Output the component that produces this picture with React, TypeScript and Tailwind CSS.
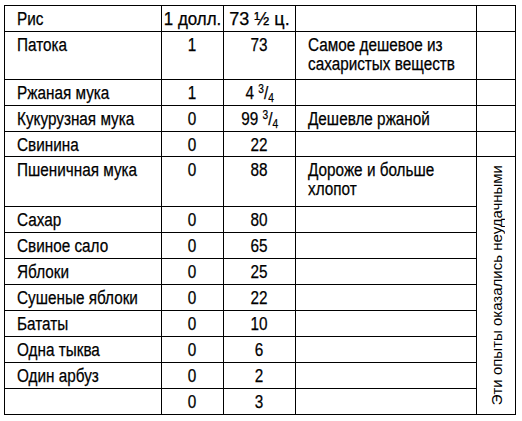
import React from "react";

type Row = { name: string; a: string; b: React.ReactNode; note?: React.ReactNode; h: string };

const frac = (whole: string) => (
  <>
    {whole} <sup className="text-[12px]">3</sup>/<sub className="text-[12px]">4</sub>
  </>
);

const rows: Row[] = [
  { name: "Рис", a: "1 долл.", b: "73 ½ ц.", h: "h-[26px]" },
  {
    name: "Патока",
    a: "1",
    b: "73",
    note: (
      <>
        Самое дешевое из
        <br />
        сахаристых веществ
      </>
    ),
    h: "h-[48px]",
  },
  { name: "Ржаная мука", a: "1", b: frac("4"), h: "h-[26px]" },
  { name: "Кукурузная мука", a: "0", b: frac("99"), note: "Дешевле ржаной", h: "h-[26px]" },
  { name: "Свинина", a: "0", b: "22", h: "h-[25px]" },
  {
    name: "Пшеничная мука",
    a: "0",
    b: "88",
    note: (
      <>
        Дороже и больше
        <br />
        хлопот
      </>
    ),
    h: "h-[50px]",
  },
  { name: "Сахар", a: "0", b: "80", h: "h-[26px]" },
  { name: "Свиное сало", a: "0", b: "65", h: "h-[26px]" },
  { name: "Яблоки", a: "0", b: "25", h: "h-[26px]" },
  { name: "Сушеные яблоки", a: "0", b: "22", h: "h-[26px]" },
  { name: "Бататы", a: "0", b: "10", h: "h-[26px]" },
  { name: "Одна тыква", a: "0", b: "6", h: "h-[26px]" },
  { name: "Один арбуз", a: "0", b: "2", h: "h-[26px]" },
  { name: "", a: "0", b: "3", h: "h-[26px]" },
];

export default function App() {
  return (
    <div className="w-[522px] h-[421px] overflow-hidden bg-white pt-[5px] pl-[4px] text-black font-['Liberation_Sans','Arial',sans-serif] text-[18px] leading-[19px] [-webkit-text-stroke:0.25px_#000]">
      <table className="border-collapse table-fixed w-[511px]">
        <colgroup>
          <col className="w-[157px]" />
          <col className="w-[62px]" />
          <col className="w-[72px]" />
          <col className="w-[181px]" />
          <col className="w-[39px]" />
        </colgroup>
        <tbody>
          {rows.map((r, i) => (
            <tr key={i} className={r.h}>
              <td className="border border-black align-top p-0 pt-[4px] pl-[12px] whitespace-nowrap">
                <span className="inline-block origin-left scale-x-[0.85]">{r.name}</span>
              </td>
              <td className="border border-black align-top p-0 pt-[4px] text-center whitespace-nowrap">
                <span className={i === 0 ? "inline-block origin-center scale-x-[0.94]" : "inline-block origin-center scale-x-[0.85]"}>
                  {r.a}
                </span>
              </td>
              <td className="border border-black align-top p-0 pt-[4px] text-center whitespace-nowrap">
                <span className={i === 0 ? "inline-block origin-center scale-x-[1]" : "inline-block origin-center scale-x-[0.85]"}>
                  {r.b}
                </span>
              </td>
              <td className="border border-black align-top p-0 pt-[4px] pl-[12px] whitespace-nowrap">
                <span className="inline-block origin-left scale-x-[0.85]">{r.note ?? ""}</span>
              </td>
              {i < 5 ? (
                <td className="border border-black p-0"></td>
              ) : i === 5 ? (
                <td rowSpan={9} className="border border-black p-0 align-middle">
                  <div className="h-[200px] flex flex-col items-center justify-center">
                    <span className="[writing-mode:vertical-rl] rotate-180 whitespace-nowrap text-[15px] leading-[19px] [-webkit-text-stroke:0px]">
                      Эти опыты оказались неудачными
                    </span>
                  </div>
                </td>
              ) : null}
            </tr>
          ))}
        </tbody>
      </table>
    </div>
  );
}
